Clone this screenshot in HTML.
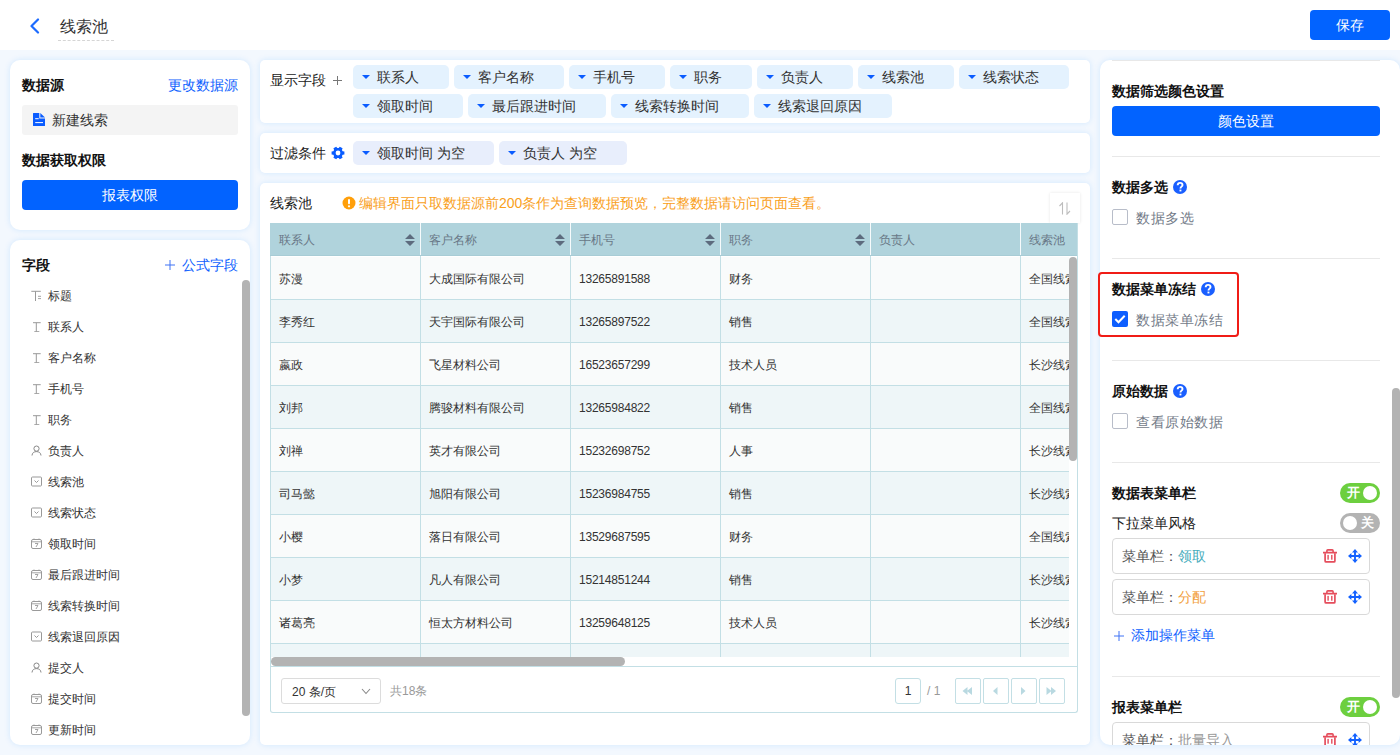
<!DOCTYPE html>
<html><head><meta charset="utf-8">
<style>
*{box-sizing:border-box;margin:0;padding:0}
html,body{width:1400px;height:755px;overflow:hidden}
body{font-family:"Liberation Sans",sans-serif;background:#f3f8fe;color:#222;position:relative;font-size:14px}
.a{position:absolute;white-space:nowrap}
.hdr{position:absolute;left:0;top:0;width:1400px;height:50px;background:#fff}
.card{position:absolute;background:#fff;box-shadow:0 0 6px rgba(0,135,255,0.14)}
.b{font-weight:bold;color:#111}
.blue{color:#0f62fe}
.btn{position:absolute;background:#0263ff;color:#fff;border-radius:4px;text-align:center}
.tag{position:absolute;height:24px;border-radius:5px;background:#e4f2fe;line-height:24px;padding-left:24px;font-size:14px;color:#333}
.tag:before{content:"";position:absolute;left:8.5px;top:10px;border-left:4.3px solid transparent;border-right:4.3px solid transparent;border-top:4.8px solid #0a5cff}
.ftag{background:#e8eefc}
.fi{position:absolute;left:48px;font-size:12px;color:#333;line-height:16px}
.fic{position:absolute;left:31px;width:11px;height:11px}
</style></head><body>
<div class="hdr">
  <svg class="a" style="left:29px;top:18px" width="11" height="16" viewBox="0 0 11 16"><path d="M9 1.5 L2.5 8 L9 14.5" fill="none" stroke="#1c6bff" stroke-width="2.2" stroke-linecap="round" stroke-linejoin="round"/></svg>
  <div class="a" style="left:60px;top:15.5px;font-size:16px;line-height:22px;color:#333">线索池</div>
  <div class="a" style="left:58px;top:40px;width:56px;border-top:1px dashed #d5d5d5"></div>
  <div class="btn" style="left:1310px;top:10px;width:80px;height:30px;line-height:30px;font-size:14px">保存</div>
</div>

<!-- left card 1 -->
<div class="card" style="left:10px;top:60px;width:240px;height:170px;border-radius:10px">
  <div class="a b" style="left:12px;top:15px;line-height:20px">数据源</div>
  <div class="a blue" style="right:12px;top:15px;line-height:20px">更改数据源</div>
  <div class="a" style="left:12px;top:45px;width:216px;height:30px;background:#f4f4f4;border-radius:3px">
    <svg class="a" style="left:11px;top:8px" width="12" height="13" viewBox="0 0 12 13"><path d="M0.5 0H6.3V5.4H12V12.5Q12 13 11.5 13H0.5Q0 13 0 12.5V0.5Q0 0 0.5 0Z" fill="#0a5cff"/><path d="M7.3 0L12 4.5H7.3Z" fill="#0a5cff"/><rect x="2.2" y="5.2" width="3.5" height="1" fill="#fff"/><rect x="2.2" y="9.1" width="7.8" height="1" fill="#fff"/></svg>
    <div class="a" style="left:30px;top:5px;line-height:20px;color:#333">新建线索</div>
  </div>
  <div class="a b" style="left:12px;top:90px;line-height:20px">数据获取权限</div>
  <div class="btn" style="left:12px;top:120px;width:216px;height:30px;line-height:30px">报表权限</div>
</div>

<!-- left card 2 -->
<div class="card" style="left:10px;top:240px;width:240px;height:505px;border-radius:10px;overflow:hidden">
  <div class="a b" style="left:12px;top:15px;line-height:20px">字段</div>
  <svg class="a" style="left:155px;top:20px" width="10" height="10" viewBox="0 0 10 10"><path d="M5 0V10M0 5H10" stroke="#3f72f5" stroke-width="1"/></svg><div class="a blue" style="right:12px;top:15px;line-height:20px">公式字段</div>
  <div class="a" style="left:232px;top:40px;width:8px;height:436px;background:#b3b3b3;border-radius:4px"></div>
</div>
<div class="a" style="left:0;top:280px;width:240px;height:465px;overflow:hidden"><div class="a" style="left:0;top:8px;width:240px;height:16px"><svg class="fic" style="top:2px" viewBox="0 0 11 11"><path d="M0.3 1.3H9.8M4.5 1.3V11" stroke="#999" stroke-width="1" fill="none"/><path d="M7 6.3H10M7 8.6H10" stroke="#999" stroke-width="0.9"/></svg><div class="fi" style="top:0">标题</div></div><div class="a" style="left:0;top:39px;width:240px;height:16px"><svg class="fic" style="top:2px" viewBox="0 0 11 11"><path d="M2 1.7H9.7M5.3 1.7V10.7M3.3 10.7H8.3" stroke="#999" stroke-width="1" fill="none"/></svg><div class="fi" style="top:0">联系人</div></div><div class="a" style="left:0;top:70px;width:240px;height:16px"><svg class="fic" style="top:2px" viewBox="0 0 11 11"><path d="M2 1.7H9.7M5.3 1.7V10.7M3.3 10.7H8.3" stroke="#999" stroke-width="1" fill="none"/></svg><div class="fi" style="top:0">客户名称</div></div><div class="a" style="left:0;top:101px;width:240px;height:16px"><svg class="fic" style="top:2px" viewBox="0 0 11 11"><path d="M2 1.7H9.7M5.3 1.7V10.7M3.3 10.7H8.3" stroke="#999" stroke-width="1" fill="none"/></svg><div class="fi" style="top:0">手机号</div></div><div class="a" style="left:0;top:132px;width:240px;height:16px"><svg class="fic" style="top:2px" viewBox="0 0 11 11"><path d="M2 1.7H9.7M5.3 1.7V10.7M3.3 10.7H8.3" stroke="#999" stroke-width="1" fill="none"/></svg><div class="fi" style="top:0">职务</div></div><div class="a" style="left:0;top:163px;width:240px;height:16px"><svg class="fic" style="top:2px" viewBox="0 0 11 11"><circle cx="5.5" cy="3.6" r="2.6" stroke="#888" stroke-width="1" fill="none"/><path d="M1 10.5C1.2 7.8 3 6.6 5.5 6.6S9.8 7.8 10 10.5" stroke="#888" stroke-width="1" fill="none"/></svg><div class="fi" style="top:0">负责人</div></div><div class="a" style="left:0;top:194px;width:240px;height:16px"><svg class="fic" style="top:2px" viewBox="0 0 11 11"><rect x="0.5" y="1" width="10" height="9" rx="1" stroke="#999" stroke-width="1" fill="none"/><path d="M3.5 4.5L5.5 6.5L7.5 4.5" stroke="#999" stroke-width="1" fill="none"/></svg><div class="fi" style="top:0">线索池</div></div><div class="a" style="left:0;top:225px;width:240px;height:16px"><svg class="fic" style="top:2px" viewBox="0 0 11 11"><rect x="0.5" y="1" width="10" height="9" rx="1" stroke="#999" stroke-width="1" fill="none"/><path d="M3.5 4.5L5.5 6.5L7.5 4.5" stroke="#999" stroke-width="1" fill="none"/></svg><div class="fi" style="top:0">线索状态</div></div><div class="a" style="left:0;top:256px;width:240px;height:16px"><svg class="fic" style="top:2px" viewBox="0 0 11 11"><rect x="0.5" y="1.5" width="10" height="9" rx="1.5" stroke="#9a9a9a" stroke-width="1" fill="none"/><path d="M0.5 3.8H10.5M3 0.5V2M8 0.5V2M4 5.5H7L5 9" stroke="#9a9a9a" stroke-width="0.9" fill="none"/></svg><div class="fi" style="top:0">领取时间</div></div><div class="a" style="left:0;top:287px;width:240px;height:16px"><svg class="fic" style="top:2px" viewBox="0 0 11 11"><rect x="0.5" y="1.5" width="10" height="9" rx="1.5" stroke="#9a9a9a" stroke-width="1" fill="none"/><path d="M0.5 3.8H10.5M3 0.5V2M8 0.5V2M4 5.5H7L5 9" stroke="#9a9a9a" stroke-width="0.9" fill="none"/></svg><div class="fi" style="top:0">最后跟进时间</div></div><div class="a" style="left:0;top:318px;width:240px;height:16px"><svg class="fic" style="top:2px" viewBox="0 0 11 11"><rect x="0.5" y="1.5" width="10" height="9" rx="1.5" stroke="#9a9a9a" stroke-width="1" fill="none"/><path d="M0.5 3.8H10.5M3 0.5V2M8 0.5V2M4 5.5H7L5 9" stroke="#9a9a9a" stroke-width="0.9" fill="none"/></svg><div class="fi" style="top:0">线索转换时间</div></div><div class="a" style="left:0;top:349px;width:240px;height:16px"><svg class="fic" style="top:2px" viewBox="0 0 11 11"><rect x="0.5" y="1" width="10" height="9" rx="1" stroke="#999" stroke-width="1" fill="none"/><path d="M3.5 4.5L5.5 6.5L7.5 4.5" stroke="#999" stroke-width="1" fill="none"/></svg><div class="fi" style="top:0">线索退回原因</div></div><div class="a" style="left:0;top:380px;width:240px;height:16px"><svg class="fic" style="top:2px" viewBox="0 0 11 11"><circle cx="5.5" cy="3.6" r="2.6" stroke="#888" stroke-width="1" fill="none"/><path d="M1 10.5C1.2 7.8 3 6.6 5.5 6.6S9.8 7.8 10 10.5" stroke="#888" stroke-width="1" fill="none"/></svg><div class="fi" style="top:0">提交人</div></div><div class="a" style="left:0;top:411px;width:240px;height:16px"><svg class="fic" style="top:2px" viewBox="0 0 11 11"><rect x="0.5" y="1.5" width="10" height="9" rx="1.5" stroke="#9a9a9a" stroke-width="1" fill="none"/><path d="M0.5 3.8H10.5M3 0.5V2M8 0.5V2M4 5.5H7L5 9" stroke="#9a9a9a" stroke-width="0.9" fill="none"/></svg><div class="fi" style="top:0">提交时间</div></div><div class="a" style="left:0;top:442px;width:240px;height:16px"><svg class="fic" style="top:2px" viewBox="0 0 11 11"><rect x="0.5" y="1.5" width="10" height="9" rx="1.5" stroke="#9a9a9a" stroke-width="1" fill="none"/><path d="M0.5 3.8H10.5M3 0.5V2M8 0.5V2M4 5.5H7L5 9" stroke="#9a9a9a" stroke-width="0.9" fill="none"/></svg><div class="fi" style="top:0">更新时间</div></div></div>

<!-- middle card 1 -->
<div class="card" style="left:260px;top:60px;width:830px;height:63px;border-radius:5px">
  <div class="a" style="left:10px;top:10px;line-height:20px;color:#222">显示字段</div><svg class="a" style="left:73px;top:16px" width="9" height="9" viewBox="0 0 9 9"><path d="M4.5 0V9M0 4.5H9" stroke="#777" stroke-width="1"/></svg>
</div>
<div class="tag" style="left:353px;top:65px;width:96px">联系人</div>
<div class="tag" style="left:454px;top:65px;width:110px">客户名称</div>
<div class="tag" style="left:569px;top:65px;width:96px">手机号</div>
<div class="tag" style="left:670px;top:65px;width:82px">职务</div>
<div class="tag" style="left:757px;top:65px;width:96px">负责人</div>
<div class="tag" style="left:858px;top:65px;width:96px">线索池</div>
<div class="tag" style="left:959px;top:65px;width:110px">线索状态</div>
<div class="tag" style="left:353px;top:94px;width:110px">领取时间</div>
<div class="tag" style="left:468px;top:94px;width:138px">最后跟进时间</div>
<div class="tag" style="left:611px;top:94px;width:138px">线索转换时间</div>
<div class="tag" style="left:754px;top:94px;width:138px">线索退回原因</div>

<!-- middle card 2 -->
<div class="card" style="left:260px;top:133px;width:830px;height:40px;border-radius:5px">
  <div class="a" style="left:10px;top:10px;line-height:20px;color:#222">过滤条件</div>
  <svg class="a" style="left:70.5px;top:13px" width="14" height="14" viewBox="0 0 14 14"><path d="M11.64 5.13 L13.40 5.40 L13.40 8.60 L11.64 8.87 L10.94 10.08 L11.58 11.75 L8.82 13.34 L7.70 11.95 L6.30 11.95 L5.18 13.34 L2.42 11.75 L3.06 10.08 L2.36 8.87 L0.60 8.60 L0.60 5.40 L2.36 5.13 L3.06 3.92 L2.42 2.25 L5.18 0.66 L6.30 2.05 L7.70 2.05 L8.82 0.66 L11.58 2.25 L10.94 3.92Z" fill="#0a5cff"/><circle cx="7" cy="7" r="2.4" fill="#fff"/></svg>
</div>
<div class="tag ftag" style="left:353px;top:141px;width:141px">领取时间 为空</div>
<div class="tag ftag" style="left:499px;top:141px;width:128px">负责人 为空</div>

<!-- middle card 3 (table) -->
<div class="card" style="left:260px;top:183px;width:830px;height:562px;border-radius:5px">
  <div class="a" style="left:10px;top:10px;line-height:20px;color:#222">线索池</div>
  <svg class="a" style="left:82px;top:13px" width="14" height="14" viewBox="0 0 14 14"><circle cx="7" cy="7" r="6.5" fill="#ff9f0a"/><rect x="6" y="3" width="2" height="5.2" rx="1" fill="#fff"/><circle cx="7" cy="10.3" r="1.1" fill="#fff"/></svg>
  <div class="a" style="left:99px;top:10px;line-height:20px;color:#f9a01b">编辑界面只取数据源前200条作为查询数据预览，完整数据请访问页面查看。</div>
  <div class="a" style="left:790px;top:10px;width:30px;height:30px;background:#fff;box-shadow:0 0 3px rgba(0,0,0,0.10)"><svg class="a" style="left:8px;top:9px" width="14" height="13" viewBox="0 0 14 13"><path d="M4.5 12.5V0.8L1.5 4M9 0.5V12.2L12 9" stroke="#bdbdbd" stroke-width="1.1" fill="none"/></svg></div>
</div>
<div class="a" style="left:270px;top:223px;width:808px;height:490px;border:1px solid #c3dfe5;border-top:none;border-radius:0 0 3px 3px;background:#fff"></div><div class="a" style="left:270px;top:223px;width:807px;height:33px;overflow:hidden;background:#b0d3dc;border-bottom:1px solid #a8ccd5"><div class="a" style="left:0px;top:0;width:150px;height:32px"><div class="a" style="left:9px;top:9px;line-height:17px;font-size:12px;color:#687786">联系人</div><svg class="a" style="left:135px;top:11px" width="10" height="12" viewBox="0 0 10 12"><path d="M5 0L10 5H0Z M5 12L10 7H0Z" fill="#5d6b7e"/></svg></div><div class="a" style="left:150px;top:0;width:150px;height:32px"><div class="a" style="left:9px;top:9px;line-height:17px;font-size:12px;color:#687786">客户名称</div><svg class="a" style="left:135px;top:11px" width="10" height="12" viewBox="0 0 10 12"><path d="M5 0L10 5H0Z M5 12L10 7H0Z" fill="#5d6b7e"/></svg></div><div class="a" style="left:149.5px;top:0;width:1.5px;height:32px;background:#fff;opacity:0.9"></div><div class="a" style="left:300px;top:0;width:150px;height:32px"><div class="a" style="left:9px;top:9px;line-height:17px;font-size:12px;color:#687786">手机号</div><svg class="a" style="left:135px;top:11px" width="10" height="12" viewBox="0 0 10 12"><path d="M5 0L10 5H0Z M5 12L10 7H0Z" fill="#5d6b7e"/></svg></div><div class="a" style="left:299.5px;top:0;width:1.5px;height:32px;background:#fff;opacity:0.9"></div><div class="a" style="left:450px;top:0;width:150px;height:32px"><div class="a" style="left:9px;top:9px;line-height:17px;font-size:12px;color:#687786">职务</div><svg class="a" style="left:135px;top:11px" width="10" height="12" viewBox="0 0 10 12"><path d="M5 0L10 5H0Z M5 12L10 7H0Z" fill="#5d6b7e"/></svg></div><div class="a" style="left:449.5px;top:0;width:1.5px;height:32px;background:#fff;opacity:0.9"></div><div class="a" style="left:600px;top:0;width:150px;height:32px"><div class="a" style="left:9px;top:9px;line-height:17px;font-size:12px;color:#687786">负责人</div></div><div class="a" style="left:599.5px;top:0;width:1.5px;height:32px;background:#fff;opacity:0.9"></div><div class="a" style="left:750px;top:0;width:150px;height:32px"><div class="a" style="left:9px;top:9px;line-height:17px;font-size:12px;color:#687786">线索池</div></div><div class="a" style="left:749.5px;top:0;width:1.5px;height:32px;background:#fff;opacity:0.9"></div></div><div class="a" style="left:271px;top:256px;width:798px;height:401px;overflow:hidden;background:#fff"><div class="a" style="left:0;top:1px;width:900px;height:43px;background:#f9fbfb;border-bottom:1px solid #c3dfe5"></div><div class="a" style="left:8px;top:15px;line-height:17px;font-size:12px;color:#333">苏漫</div><div class="a" style="left:158px;top:15px;line-height:17px;font-size:12px;color:#333">大成国际有限公司</div><div class="a" style="left:308px;top:15px;line-height:17px;font-size:12px;color:#333;letter-spacing:-0.22px">13265891588</div><div class="a" style="left:458px;top:15px;line-height:17px;font-size:12px;color:#333">财务</div><div class="a" style="left:758px;top:15px;line-height:17px;font-size:12px;color:#333">全国线索</div><div class="a" style="left:0;top:44px;width:900px;height:43px;background:#eef6f8;border-bottom:1px solid #c3dfe5"></div><div class="a" style="left:8px;top:58px;line-height:17px;font-size:12px;color:#333">李秀红</div><div class="a" style="left:158px;top:58px;line-height:17px;font-size:12px;color:#333">天宇国际有限公司</div><div class="a" style="left:308px;top:58px;line-height:17px;font-size:12px;color:#333;letter-spacing:-0.22px">13265897522</div><div class="a" style="left:458px;top:58px;line-height:17px;font-size:12px;color:#333">销售</div><div class="a" style="left:758px;top:58px;line-height:17px;font-size:12px;color:#333">全国线索</div><div class="a" style="left:0;top:87px;width:900px;height:43px;background:#f9fbfb;border-bottom:1px solid #c3dfe5"></div><div class="a" style="left:8px;top:101px;line-height:17px;font-size:12px;color:#333">嬴政</div><div class="a" style="left:158px;top:101px;line-height:17px;font-size:12px;color:#333">飞星材料公司</div><div class="a" style="left:308px;top:101px;line-height:17px;font-size:12px;color:#333;letter-spacing:-0.22px">16523657299</div><div class="a" style="left:458px;top:101px;line-height:17px;font-size:12px;color:#333">技术人员</div><div class="a" style="left:758px;top:101px;line-height:17px;font-size:12px;color:#333">长沙线索</div><div class="a" style="left:0;top:130px;width:900px;height:43px;background:#eef6f8;border-bottom:1px solid #c3dfe5"></div><div class="a" style="left:8px;top:144px;line-height:17px;font-size:12px;color:#333">刘邦</div><div class="a" style="left:158px;top:144px;line-height:17px;font-size:12px;color:#333">腾骏材料有限公司</div><div class="a" style="left:308px;top:144px;line-height:17px;font-size:12px;color:#333;letter-spacing:-0.22px">13265984822</div><div class="a" style="left:458px;top:144px;line-height:17px;font-size:12px;color:#333">销售</div><div class="a" style="left:758px;top:144px;line-height:17px;font-size:12px;color:#333">全国线索</div><div class="a" style="left:0;top:173px;width:900px;height:43px;background:#f9fbfb;border-bottom:1px solid #c3dfe5"></div><div class="a" style="left:8px;top:187px;line-height:17px;font-size:12px;color:#333">刘禅</div><div class="a" style="left:158px;top:187px;line-height:17px;font-size:12px;color:#333">英才有限公司</div><div class="a" style="left:308px;top:187px;line-height:17px;font-size:12px;color:#333;letter-spacing:-0.22px">15232698752</div><div class="a" style="left:458px;top:187px;line-height:17px;font-size:12px;color:#333">人事</div><div class="a" style="left:758px;top:187px;line-height:17px;font-size:12px;color:#333">长沙线索</div><div class="a" style="left:0;top:216px;width:900px;height:43px;background:#eef6f8;border-bottom:1px solid #c3dfe5"></div><div class="a" style="left:8px;top:230px;line-height:17px;font-size:12px;color:#333">司马懿</div><div class="a" style="left:158px;top:230px;line-height:17px;font-size:12px;color:#333">旭阳有限公司</div><div class="a" style="left:308px;top:230px;line-height:17px;font-size:12px;color:#333;letter-spacing:-0.22px">15236984755</div><div class="a" style="left:458px;top:230px;line-height:17px;font-size:12px;color:#333">销售</div><div class="a" style="left:758px;top:230px;line-height:17px;font-size:12px;color:#333">长沙线索</div><div class="a" style="left:0;top:259px;width:900px;height:43px;background:#f9fbfb;border-bottom:1px solid #c3dfe5"></div><div class="a" style="left:8px;top:273px;line-height:17px;font-size:12px;color:#333">小樱</div><div class="a" style="left:158px;top:273px;line-height:17px;font-size:12px;color:#333">落日有限公司</div><div class="a" style="left:308px;top:273px;line-height:17px;font-size:12px;color:#333;letter-spacing:-0.22px">13529687595</div><div class="a" style="left:458px;top:273px;line-height:17px;font-size:12px;color:#333">财务</div><div class="a" style="left:758px;top:273px;line-height:17px;font-size:12px;color:#333">全国线索</div><div class="a" style="left:0;top:302px;width:900px;height:43px;background:#eef6f8;border-bottom:1px solid #c3dfe5"></div><div class="a" style="left:8px;top:316px;line-height:17px;font-size:12px;color:#333">小梦</div><div class="a" style="left:158px;top:316px;line-height:17px;font-size:12px;color:#333">凡人有限公司</div><div class="a" style="left:308px;top:316px;line-height:17px;font-size:12px;color:#333;letter-spacing:-0.22px">15214851244</div><div class="a" style="left:458px;top:316px;line-height:17px;font-size:12px;color:#333">销售</div><div class="a" style="left:758px;top:316px;line-height:17px;font-size:12px;color:#333">长沙线索</div><div class="a" style="left:0;top:345px;width:900px;height:43px;background:#f9fbfb;border-bottom:1px solid #c3dfe5"></div><div class="a" style="left:8px;top:359px;line-height:17px;font-size:12px;color:#333">诸葛亮</div><div class="a" style="left:158px;top:359px;line-height:17px;font-size:12px;color:#333">恒太方材料公司</div><div class="a" style="left:308px;top:359px;line-height:17px;font-size:12px;color:#333;letter-spacing:-0.22px">13259648125</div><div class="a" style="left:458px;top:359px;line-height:17px;font-size:12px;color:#333">技术人员</div><div class="a" style="left:758px;top:359px;line-height:17px;font-size:12px;color:#333">长沙线索</div><div class="a" style="left:0;top:388px;width:900px;height:43px;background:#eef6f8;border-bottom:1px solid #c3dfe5"></div><div class="a" style="left:149px;top:0;width:1px;height:420px;background:#c3dfe5"></div><div class="a" style="left:299px;top:0;width:1px;height:420px;background:#c3dfe5"></div><div class="a" style="left:449px;top:0;width:1px;height:420px;background:#c3dfe5"></div><div class="a" style="left:599px;top:0;width:1px;height:420px;background:#c3dfe5"></div><div class="a" style="left:749px;top:0;width:1px;height:420px;background:#c3dfe5"></div></div><div class="a" style="left:1069px;top:257px;width:8px;height:204px;background:#b3b3b3;border-radius:4px"></div><div class="a" style="left:271px;top:657px;width:354px;height:9px;background:#b3b3b3;border-radius:4.5px"></div><div class="a" style="left:270px;top:666px;width:808px;height:1px;background:#c3dfe5"></div><div class="a" style="left:281px;top:678px;width:100px;height:26px;border:1px solid #dcdcdc;border-radius:3px;background:#fff"><div class="a" style="left:10px;top:5px;line-height:17px;font-size:12px;color:#333">20 条/页</div><svg class="a" style="left:79px;top:9px" width="10" height="7" viewBox="0 0 10 7"><path d="M1 1L5 5.5L9 1" stroke="#888" stroke-width="1.1" fill="none"/></svg></div><div class="a" style="left:390px;top:683px;line-height:17px;font-size:12px;color:#999">共18条</div><div class="a" style="left:895px;top:678px;width:26px;height:26px;border:1px solid #c3dfe5;border-radius:3px;text-align:center;line-height:24px;font-size:12px;color:#333">1</div><div class="a" style="left:927px;top:683px;line-height:17px;font-size:12px;color:#999">/ 1</div><div class="a" style="left:955px;top:678px;width:26px;height:26px;border:1px solid #c3dfe5;border-radius:2px"><svg class="a" style="left:4px;top:5px" width="14" height="14" viewBox="0 0 14 14"><path d="M7.5 3L2.5 7L7.5 11Z M12 3L7 7L12 11Z" fill="#b9d9e1"/></svg></div><div class="a" style="left:983px;top:678px;width:26px;height:26px;border:1px solid #c3dfe5;border-radius:2px"><svg class="a" style="left:4px;top:5px" width="14" height="14" viewBox="0 0 14 14"><path d="M9.5 3L5 7L9.5 11Z" fill="#b9d9e1"/></svg></div><div class="a" style="left:1011px;top:678px;width:26px;height:26px;border:1px solid #c3dfe5;border-radius:2px"><svg class="a" style="left:4px;top:5px" width="14" height="14" viewBox="0 0 14 14"><path d="M5 3L9.5 7L5 11Z" fill="#b9d9e1"/></svg></div><div class="a" style="left:1039px;top:678px;width:26px;height:26px;border:1px solid #c3dfe5;border-radius:2px"><svg class="a" style="left:4px;top:5px" width="14" height="14" viewBox="0 0 14 14"><path d="M2.5 3L7.5 7L2.5 11Z M7 3L12 7L7 11Z" fill="#b9d9e1"/></svg></div>

<!-- right panel -->
<div class="card" style="left:1100px;top:60px;width:300px;height:685px;border-radius:10px;overflow:hidden">
</div>
<div class="a" style="left:1100px;top:60px;width:300px;height:685px;overflow:hidden;border-radius:10px"><div class="a" style="left:-1100px;top:-60px;width:1400px;height:755px"><div class="a" style="left:1112px;top:60px;width:268px;height:1px;background:#e8e8e8"></div><div class="a b" style="left:1112px;top:81px;line-height:20px">数据筛选颜色设置</div><div class="btn" style="left:1112px;top:106px;width:268px;height:30px;line-height:30px">颜色设置</div><div class="a" style="left:1112px;top:156px;width:268px;height:1px;background:#e8e8e8"></div><div class="a b" style="left:1112px;top:177px;line-height:20px">数据多选</div><svg class="a" style="left:1173px;top:180px" width="14" height="14" viewBox="0 0 14 14"><circle cx="7" cy="7" r="7" fill="#1a5fff"/><path d="M4.7 5.3C4.7 3.8 5.7 2.9 7.1 2.9S9.5 3.8 9.5 5.0C9.5 6.6 7.5 6.7 7.5 8.3V8.6" stroke="#fff" stroke-width="1.9" fill="none"/><rect x="6.5" y="9.6" width="1.9" height="1.8" fill="#fff"/></svg><div class="a" style="left:1112px;top:209px;width:16px;height:16px;border:1px solid #b8bdc9;border-radius:2px;background:#fff"></div><div class="a" style="left:1136px;top:207.7px;line-height:20px;color:#737b88;letter-spacing:0.6px">数据多选</div><div class="a" style="left:1112px;top:258px;width:268px;height:1px;background:#e8e8e8"></div><div class="a b" style="left:1112px;top:279px;line-height:20px">数据菜单冻结</div><svg class="a" style="left:1201px;top:282px" width="14" height="14" viewBox="0 0 14 14"><circle cx="7" cy="7" r="7" fill="#1a5fff"/><path d="M4.7 5.3C4.7 3.8 5.7 2.9 7.1 2.9S9.5 3.8 9.5 5.0C9.5 6.6 7.5 6.7 7.5 8.3V8.6" stroke="#fff" stroke-width="1.9" fill="none"/><rect x="6.5" y="9.6" width="1.9" height="1.8" fill="#fff"/></svg><div class="a" style="left:1112px;top:311px;width:16px;height:16px;background:#0d5eff;border-radius:2px"><svg class="a" style="left:2px;top:3px" width="12" height="10" viewBox="0 0 12 10"><path d="M1.3 5L4.5 8.2L10.7 1.8" stroke="#fff" stroke-width="2" fill="none"/></svg></div><div class="a" style="left:1136px;top:309.7px;line-height:20px;color:#737b88;letter-spacing:0.6px">数据菜单冻结</div><div class="a" style="left:1112px;top:360px;width:268px;height:1px;background:#e8e8e8"></div><div class="a b" style="left:1112px;top:381px;line-height:20px">原始数据</div><svg class="a" style="left:1173px;top:384px" width="14" height="14" viewBox="0 0 14 14"><circle cx="7" cy="7" r="7" fill="#1a5fff"/><path d="M4.7 5.3C4.7 3.8 5.7 2.9 7.1 2.9S9.5 3.8 9.5 5.0C9.5 6.6 7.5 6.7 7.5 8.3V8.6" stroke="#fff" stroke-width="1.9" fill="none"/><rect x="6.5" y="9.6" width="1.9" height="1.8" fill="#fff"/></svg><div class="a" style="left:1112px;top:413px;width:16px;height:16px;border:1px solid #b8bdc9;border-radius:2px;background:#fff"></div><div class="a" style="left:1136px;top:411.7px;line-height:20px;color:#737b88;letter-spacing:0.6px">查看原始数据</div><div class="a" style="left:1112px;top:462px;width:268px;height:1px;background:#e8e8e8"></div><div class="a b" style="left:1112px;top:483px;line-height:20px">数据表菜单栏</div><div class="a" style="left:1340px;top:483px;width:40px;height:20px;border-radius:10px;background:#6dcf3f"><div class="a" style="left:7px;top:2px;line-height:16px;font-size:12.5px;color:#fff;font-weight:bold">开</div><div class="a" style="left:23px;top:3px;width:14px;height:14px;border-radius:7px;background:#fff"></div></div><div class="a" style="left:1112px;top:513px;line-height:20px;color:#222">下拉菜单风格</div><div class="a" style="left:1340px;top:513px;width:40px;height:20px;border-radius:10px;background:#b3b3b3"><div class="a" style="left:21px;top:2px;line-height:16px;font-size:12.5px;color:#fff;font-weight:bold">关</div><div class="a" style="left:3px;top:3px;width:14px;height:14px;border-radius:7px;background:#fff"></div></div><div class="a" style="left:1112px;top:538px;width:258px;height:36px;border:1px solid #d9d9d9;border-radius:4px;background:#fff"></div><div class="a" style="left:1122px;top:546px;line-height:20px;color:#555">菜单栏：<span style="color:#44abbb">领取</span></div><svg class="a" style="left:1323px;top:549px" width="14" height="14" viewBox="0 0 14 14"><path d="M3.9 3.2V1.8Q3.9 0.9 4.8 0.9H9.2Q10.1 0.9 10.1 1.8V3.2" stroke="#e54d5c" stroke-width="1.6" fill="none"/><path d="M0 3.7H14" stroke="#e54d5c" stroke-width="1.7"/><path d="M2.1 4.2V11.9Q2.1 12.9 3.1 12.9H10.9Q11.9 12.9 11.9 11.9V4.2" stroke="#e54d5c" stroke-width="1.7" fill="none"/><rect x="4.4" y="5.9" width="1.4" height="4.8" fill="#e54d5c"/><rect x="8.1" y="5.9" width="1.4" height="4.8" fill="#e54d5c"/></svg><svg class="a" style="left:1348.2px;top:548.8px" width="14" height="14" viewBox="0 0 14 14"><path d="M7 2V12M2 7H12" stroke="#1462ff" stroke-width="1.9"/><path d="M7 0L10 3.4H4Z M7 14L10 10.6H4Z M0 7L3.4 4V10Z M14 7L10.6 4V10Z" fill="#1462ff"/></svg><div class="a" style="left:1112px;top:579px;width:258px;height:36px;border:1px solid #d9d9d9;border-radius:4px;background:#fff"></div><div class="a" style="left:1122px;top:587px;line-height:20px;color:#555">菜单栏：<span style="color:#f2a03c">分配</span></div><svg class="a" style="left:1323px;top:590px" width="14" height="14" viewBox="0 0 14 14"><path d="M3.9 3.2V1.8Q3.9 0.9 4.8 0.9H9.2Q10.1 0.9 10.1 1.8V3.2" stroke="#e54d5c" stroke-width="1.6" fill="none"/><path d="M0 3.7H14" stroke="#e54d5c" stroke-width="1.7"/><path d="M2.1 4.2V11.9Q2.1 12.9 3.1 12.9H10.9Q11.9 12.9 11.9 11.9V4.2" stroke="#e54d5c" stroke-width="1.7" fill="none"/><rect x="4.4" y="5.9" width="1.4" height="4.8" fill="#e54d5c"/><rect x="8.1" y="5.9" width="1.4" height="4.8" fill="#e54d5c"/></svg><svg class="a" style="left:1348.2px;top:589.8px" width="14" height="14" viewBox="0 0 14 14"><path d="M7 2V12M2 7H12" stroke="#1462ff" stroke-width="1.9"/><path d="M7 0L10 3.4H4Z M7 14L10 10.6H4Z M0 7L3.4 4V10Z M14 7L10.6 4V10Z" fill="#1462ff"/></svg><svg class="a" style="left:1114px;top:631px" width="10" height="10" viewBox="0 0 10 10"><path d="M5 0V10M0 5H10" stroke="#3f72f5" stroke-width="1"/></svg><div class="a blue" style="left:1131px;top:625px;line-height:20px">添加操作菜单</div><div class="a" style="left:1112px;top:676px;width:268px;height:1px;background:#e8e8e8"></div><div class="a b" style="left:1112px;top:697px;line-height:20px">报表菜单栏</div><div class="a" style="left:1340px;top:697px;width:40px;height:20px;border-radius:10px;background:#6dcf3f"><div class="a" style="left:7px;top:2px;line-height:16px;font-size:12.5px;color:#fff;font-weight:bold">开</div><div class="a" style="left:23px;top:3px;width:14px;height:14px;border-radius:7px;background:#fff"></div></div><div class="a" style="left:1112px;top:722px;width:258px;height:36px;border:1px solid #d9d9d9;border-radius:4px;background:#fff"></div><div class="a" style="left:1122px;top:730px;line-height:20px;color:#555">菜单栏：<span style="color:#999">批量导入</span></div><svg class="a" style="left:1323px;top:733px" width="14" height="14" viewBox="0 0 14 14"><path d="M3.9 3.2V1.8Q3.9 0.9 4.8 0.9H9.2Q10.1 0.9 10.1 1.8V3.2" stroke="#e54d5c" stroke-width="1.6" fill="none"/><path d="M0 3.7H14" stroke="#e54d5c" stroke-width="1.7"/><path d="M2.1 4.2V11.9Q2.1 12.9 3.1 12.9H10.9Q11.9 12.9 11.9 11.9V4.2" stroke="#e54d5c" stroke-width="1.7" fill="none"/><rect x="4.4" y="5.9" width="1.4" height="4.8" fill="#e54d5c"/><rect x="8.1" y="5.9" width="1.4" height="4.8" fill="#e54d5c"/></svg><svg class="a" style="left:1348.2px;top:732.8px" width="14" height="14" viewBox="0 0 14 14"><path d="M7 2V12M2 7H12" stroke="#1462ff" stroke-width="1.9"/><path d="M7 0L10 3.4H4Z M7 14L10 10.6H4Z M0 7L3.4 4V10Z M14 7L10.6 4V10Z" fill="#1462ff"/></svg></div></div><div class="a" style="left:1098px;top:272px;width:141px;height:65px;border:2.5px solid #f01c16;border-radius:4px"></div><div class="a" style="left:1392px;top:388px;width:8px;height:310px;background:#b3b3b3;border-radius:4px"></div>
</body></html>
